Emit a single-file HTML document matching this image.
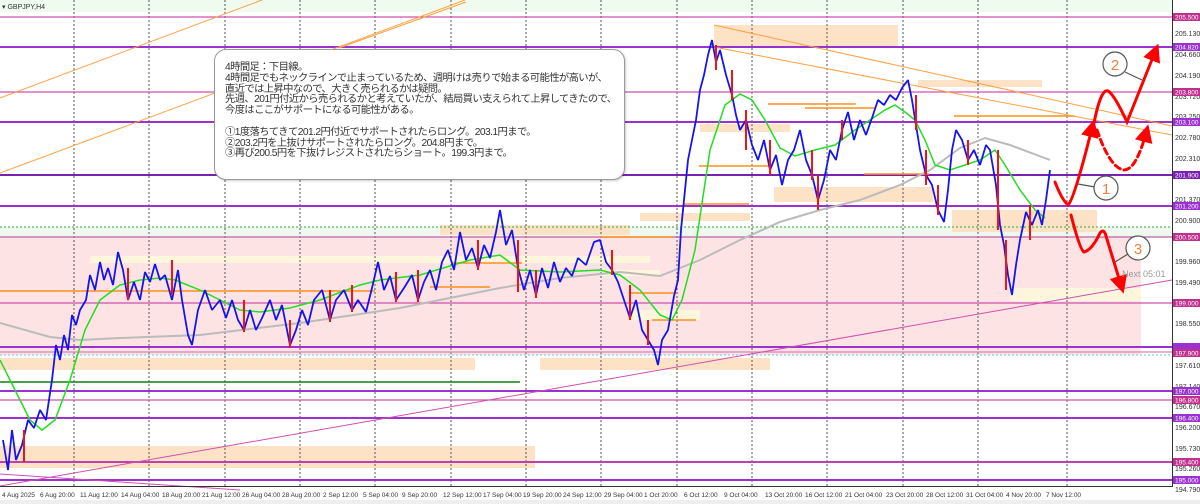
<!DOCTYPE html>
<html><head><meta charset="utf-8"><style>
body{margin:0;background:#fff;width:1200px;height:504px;overflow:hidden;font-family:"Liberation Sans","Noto Sans CJK JP",sans-serif}
#box{position:absolute;left:214px;top:49px;width:411px;height:131px;border:1px solid #999;border-radius:12px;background:#fff;box-sizing:border-box;padding:13px 0 0 10px;font-size:10.3px;line-height:10.8px;color:#333;white-space:pre;letter-spacing:-0.6px;box-shadow:1px 1px 2px rgba(0,0,0,.2)}
</style></head><body>
<svg width="1200" height="504" style="position:absolute;left:0;top:0" font-family="Liberation Sans, sans-serif">
<rect x="0" y="0" width="1200" height="504" fill="#fff"/>
<rect x="0" y="0" width="1172" height="12" fill="#f0fbf0"/>
<rect x="0" y="227" width="1172" height="10" fill="#eef8ee"/>
<rect x="0" y="237" width="1141" height="118" fill="#fde3e3"/>
<rect x="90" y="256" width="560" height="7" fill="#fdf6dc"/>
<rect x="600" y="270" width="60" height="6" fill="#fdf6dc"/>
<rect x="1010" y="288" width="131" height="13" fill="#fdf6dc"/>
<rect x="630" y="310" width="70" height="10" fill="#fdf6dc"/>
<rect x="0" y="358" width="475" height="12" fill="#fde2c6"/>
<rect x="540" y="358" width="230" height="12" fill="#fde2c6"/>
<rect x="0" y="446" width="535" height="22" fill="#fde2c6"/>
<rect x="714" y="25" width="184" height="23" fill="#fde2c6"/>
<rect x="918" y="80" width="124" height="7" fill="#fde2c6"/>
<rect x="700" y="124" width="90" height="8" fill="#fde2c6"/>
<rect x="774" y="187" width="159" height="15" fill="#fde2c6"/>
<rect x="952" y="210" width="145" height="22" fill="#fde2c6"/>
<rect x="640" y="213" width="110" height="8" fill="#fde2c6"/>
<rect x="440" y="225" width="190" height="10" fill="#fde2c6"/>
<g stroke="#555" stroke-width="1" stroke-dasharray="2,2">
<line x1="74" y1="0" x2="74" y2="486"/><line x1="149" y1="0" x2="149" y2="486"/><line x1="225" y1="0" x2="225" y2="486"/><line x1="300" y1="0" x2="300" y2="486"/><line x1="375" y1="0" x2="375" y2="486"/><line x1="451" y1="0" x2="451" y2="486"/><line x1="526" y1="0" x2="526" y2="486"/><line x1="601" y1="0" x2="601" y2="486"/><line x1="677" y1="0" x2="677" y2="486"/><line x1="752" y1="0" x2="752" y2="486"/><line x1="827" y1="0" x2="827" y2="486"/><line x1="903" y1="0" x2="903" y2="486"/><line x1="978" y1="0" x2="978" y2="486"/><line x1="1067" y1="0" x2="1067" y2="486"/>
</g>
<line x1="0" y1="227" x2="1172" y2="227" stroke="#3a3" stroke-dasharray="2,2"/>
<line x1="0" y1="355" x2="1172" y2="355" stroke="#6cd" stroke-dasharray="2,2"/>
<g fill="none">
<line x1="0" y1="17" x2="1172" y2="17" stroke="#d050b0" stroke-width="1.2"/>
<line x1="0" y1="47" x2="1172" y2="47" stroke="#9a32d0" stroke-width="2"/>
<line x1="0" y1="92" x2="1172" y2="92" stroke="#d050b0" stroke-width="1.2"/>
<line x1="0" y1="122" x2="1172" y2="122" stroke="#9a32d0" stroke-width="2"/>
<line x1="0" y1="175" x2="1172" y2="175" stroke="#7a22b0" stroke-width="2"/>
<line x1="0" y1="206" x2="1172" y2="206" stroke="#9a32d0" stroke-width="2"/>
<line x1="0" y1="237" x2="1172" y2="237" stroke="#c060a8" stroke-width="1.2"/>
<line x1="0" y1="303" x2="1172" y2="303" stroke="#d050b0" stroke-width="1.2"/>
<line x1="0" y1="347" x2="1172" y2="347" stroke="#9a32d0" stroke-width="2"/>
<line x1="0" y1="352" x2="1172" y2="352" stroke="#e080c0" stroke-width="1.2"/>
<line x1="0" y1="382" x2="520" y2="382" stroke="#108010" stroke-width="1.5"/>
<line x1="0" y1="391" x2="1172" y2="391" stroke="#9a32d0" stroke-width="2"/>
<line x1="0" y1="400" x2="1172" y2="400" stroke="#d050b0" stroke-width="1.2"/>
<line x1="0" y1="418" x2="1172" y2="418" stroke="#9a32d0" stroke-width="2"/>
<line x1="0" y1="462" x2="1172" y2="462" stroke="#c040b0" stroke-width="2"/>
<line x1="0" y1="480" x2="1172" y2="480" stroke="#9a32d0" stroke-width="2"/>
<g stroke="#ff9020" stroke-width="1.5">
<line x1="0" y1="291" x2="375" y2="291"/><line x1="430" y1="287" x2="490" y2="287"/><line x1="452" y1="263" x2="522" y2="263"/>
<line x1="600" y1="237" x2="673" y2="237"/>
<line x1="768" y1="104" x2="856" y2="104"/><line x1="805" y1="108" x2="875" y2="108"/><line x1="954" y1="116" x2="1075" y2="116"/>
<line x1="699" y1="166" x2="770" y2="166"/><line x1="864" y1="174" x2="929" y2="174"/><line x1="684" y1="204" x2="749" y2="204"/>
<line x1="631" y1="293" x2="677" y2="293"/><line x1="652" y1="320" x2="696" y2="320"/>
</g>
<g stroke="#ffa040" stroke-width="1">
<line x1="0" y1="98" x2="262" y2="0"/><line x1="0" y1="173" x2="465" y2="0"/><line x1="339" y1="48" x2="466" y2="2"/>
<line x1="714" y1="25" x2="1172" y2="126"/><line x1="714" y1="47" x2="1172" y2="135"/>
</g>
<line x1="0" y1="486" x2="1172" y2="280" stroke="#d050b0" stroke-width="1"/>
<line x1="0" y1="474" x2="240" y2="490" stroke="#d050b0" stroke-width="1"/>
<polyline stroke="#bbb" stroke-width="2" points="0,323 50,337 80,340 120,338 200,335 300,323 400,308 500,288 560,278 620,272 660,276 675,270 700,260 740,240 780,222 820,210 860,200 900,185 930,170 960,148 985,138 1010,145 1050,160"/>
<polyline stroke="#22dd22" stroke-width="1.5" points="0,360 15,390 30,420 42,430 55,420 70,380 85,330 100,300 120,285 140,280 160,278 175,280 200,290 220,300 240,310 260,312 290,308 320,300 360,285 380,280 420,275 470,260 500,255 520,270 560,272 600,270 620,275 640,290 660,315 672,320 682,300 695,250 710,150 725,105 740,94 752,100 765,120 780,148 795,156 815,150 835,145 855,130 870,120 885,110 895,105 905,112 915,120 925,140 935,165 950,170 965,165 980,160 995,150 1005,165 1020,190 1035,210 1045,218"/>
<polyline stroke="#1515ee" stroke-width="1.8" stroke-linejoin="bevel" points="3,440 8,470 12,430 16,460 22,445 28,420 34,428 40,410 46,420 52,380 56,345 60,360 64,335 68,350 72,315 76,325 80,310 86,300 90,275 95,290 100,262 104,280 108,268 113,285 118,252 123,270 128,300 134,282 140,300 145,272 150,282 155,264 160,280 165,275 172,300 178,270 182,300 188,335 192,345 198,310 205,290 212,310 220,300 226,318 232,300 238,320 244,330 250,310 256,330 262,318 270,300 276,320 282,305 290,345 296,330 302,310 308,325 314,300 322,290 330,320 336,300 344,290 352,310 358,300 366,312 372,288 378,262 384,290 390,276 396,300 404,288 412,275 418,300 424,282 430,270 436,290 442,262 448,250 454,270 460,232 466,260 472,248 478,268 484,245 490,258 496,232 500,210 506,245 512,230 518,268 524,290 530,270 536,295 542,268 548,288 554,262 560,282 566,268 572,276 578,258 586,265 594,242 600,240 606,262 612,270 618,282 624,300 630,318 636,300 642,330 648,340 654,350 658,365 662,340 668,330 674,296 678,280 681,230 684,200 688,160 692,140 696,120 700,90 704,75 708,55 712,40 716,62 720,50 726,75 732,95 736,115 740,130 746,120 752,145 758,160 764,140 770,170 776,155 782,185 788,160 794,150 800,130 806,160 812,175 818,200 824,180 830,150 836,160 842,130 848,112 854,140 860,120 866,135 872,118 878,100 884,105 890,95 896,100 902,88 908,80 912,100 916,125 920,150 926,175 932,185 938,210 944,222 948,190 952,150 956,130 962,140 968,160 974,150 980,165 986,145 990,150 996,185 1000,225 1004,245 1008,275 1012,295 1016,265 1020,240 1026,212 1032,225 1038,210 1042,225 1046,200 1050,170"/>
<g stroke="#ee1515" stroke-width="2">
<line x1="24" y1="430" x2="24" y2="462"/><line x1="128" y1="268" x2="128" y2="300"/><line x1="172" y1="260" x2="172" y2="295"/><line x1="244" y1="300" x2="244" y2="332"/><line x1="290" y1="320" x2="290" y2="348"/><line x1="330" y1="290" x2="330" y2="322"/><line x1="352" y1="285" x2="352" y2="312"/><line x1="396" y1="272" x2="396" y2="302"/><line x1="418" y1="270" x2="418" y2="302"/><line x1="478" y1="240" x2="478" y2="270"/><line x1="518" y1="240" x2="518" y2="292"/><line x1="536" y1="270" x2="536" y2="298"/><line x1="612" y1="250" x2="612" y2="275"/><line x1="630" y1="285" x2="630" y2="320"/><line x1="648" y1="320" x2="648" y2="345"/>
<line x1="716" y1="45" x2="716" y2="70"/><line x1="732" y1="70" x2="732" y2="100"/><line x1="746" y1="110" x2="746" y2="150"/><line x1="770" y1="140" x2="770" y2="175"/><line x1="812" y1="150" x2="812" y2="180"/><line x1="818" y1="175" x2="818" y2="210"/><line x1="842" y1="120" x2="842" y2="140"/><line x1="916" y1="95" x2="916" y2="130"/><line x1="926" y1="150" x2="926" y2="185"/><line x1="938" y1="185" x2="938" y2="215"/><line x1="968" y1="140" x2="968" y2="165"/><line x1="998" y1="150" x2="998" y2="230"/><line x1="1006" y1="240" x2="1006" y2="290"/><line x1="1030" y1="205" x2="1030" y2="240"/>
</g>
<defs><marker id="ah" markerWidth="6" markerHeight="6" refX="3" refY="3" orient="auto"><path d="M0,0 L6,3 L0,6 z" fill="#f00"/></marker></defs>
<g fill="none" stroke="#f00" stroke-width="3" stroke-linecap="round">
<path d="M1055,182 Q1062,200 1068,205 Q1074,200 1092,128" marker-end="url(#ah)"/>
<path d="M1094,123 Q1101,88 1108,91 Q1114,94 1127,122 L1155,52" marker-end="url(#ah)"/>
<path d="M1097,130 Q1110,168 1124,170 Q1136,170 1146,133" stroke-dasharray="6,4" marker-end="url(#ah)"/>
<path d="M1071,215 Q1080,250 1084,252 Q1092,250 1100,233 Q1104,228 1106,236 L1121,285" marker-end="url(#ah)"/>
</g>
<g stroke="#555" stroke-width="1.2" fill="#fff">
<line x1="1078" y1="184" x2="1095" y2="187"/><line x1="1125" y1="72" x2="1142" y2="80"/><line x1="1128" y1="254" x2="1115" y2="262"/>
<circle cx="1106" cy="188" r="12"/><circle cx="1115" cy="64" r="12"/><circle cx="1138" cy="248" r="12"/>
</g>
<g fill="#f08040" font-size="15" text-anchor="middle"><text x="1106" y="194">1</text><text x="1115" y="70">2</text><text x="1138" y="254">3</text></g>
<text x="1122" y="277" font-size="9" fill="#999">Next 05:01</text>
<text x="2" y="9" font-size="7" fill="#333">▾ GBPJPY,H4</text>
<line x1="1172.5" y1="0" x2="1172.5" y2="487" stroke="#333"/>
<line x1="0" y1="486.5" x2="1173" y2="486.5" stroke="#333"/>
<g font-size="7" fill="#333">
<text x="1175" y="36">205.130</text><text x="1175" y="57">204.660</text><text x="1175" y="78">204.190</text><text x="1175" y="99">203.720</text><text x="1175" y="119">203.250</text><text x="1175" y="140">202.780</text><text x="1175" y="161">202.310</text><text x="1175" y="202">201.370</text><text x="1175" y="223">200.900</text><text x="1175" y="264">199.960</text><text x="1175" y="285">199.490</text><text x="1175" y="326">198.550</text><text x="1175" y="368">197.610</text><text x="1175" y="389">197.140</text><text x="1175" y="409">196.670</text><text x="1175" y="430">196.200</text><text x="1175" y="451">195.730</text><text x="1175" y="471">195.260</text><text x="1175" y="492">194.790</text>
</g>
<g font-size="6.5" fill="#fff">
<rect x="1173" y="13" width="27" height="8" fill="#c0308f"/><text x="1175" y="19.5">205.500</text>
<rect x="1173" y="43" width="27" height="8" fill="#9a32d0"/><text x="1175" y="49.5">204.820</text>
<rect x="1173" y="88" width="27" height="8" fill="#c0308f"/><text x="1175" y="94.5">203.800</text>
<rect x="1173" y="118" width="27" height="8" fill="#9a32d0"/><text x="1175" y="124.5">203.100</text>
<rect x="1173" y="171" width="27" height="8" fill="#7a22b0"/><text x="1175" y="177.5">201.900</text>
<rect x="1173" y="202" width="27" height="8" fill="#9a32d0"/><text x="1175" y="208.5">201.200</text>
<rect x="1173" y="233" width="27" height="8" fill="#c0308f"/><text x="1175" y="239.5">200.500</text>
<rect x="1173" y="299" width="27" height="8" fill="#c0308f"/><text x="1175" y="305.5">199.000</text>
<rect x="1173" y="343" width="27" height="6" fill="#9a32d0"/>
<rect x="1173" y="349" width="27" height="8" fill="#c0308f"/><text x="1175" y="355.5">197.900</text>
<rect x="1173" y="387" width="27" height="8" fill="#9a32d0"/><text x="1175" y="393.5">197.000</text>
<rect x="1173" y="396" width="27" height="8" fill="#c0308f"/><text x="1175" y="402.5">196.800</text>
<rect x="1173" y="414" width="27" height="8" fill="#9a32d0"/><text x="1175" y="420.5">196.400</text>
<rect x="1173" y="458" width="27" height="8" fill="#c0308f"/><text x="1175" y="464.5">195.400</text>
<rect x="1173" y="476" width="27" height="8" fill="#9a32d0"/><text x="1175" y="482.5">195.000</text>
</g>
<rect x="0" y="500" width="1200" height="4" fill="#eee"/>
<g font-size="6.5" fill="#333">
<text x="2" y="497">4 Aug 2025</text><text x="40" y="497">6 Aug 20:00</text><text x="80" y="497">11 Aug 12:00</text><text x="121" y="497">14 Aug 04:00</text><text x="162" y="497">18 Aug 20:00</text><text x="202" y="497">21 Aug 12:00</text><text x="242" y="497">26 Aug 04:00</text><text x="282" y="497">28 Aug 20:00</text><text x="323" y="497">2 Sep 12:00</text><text x="363" y="497">5 Sep 04:00</text><text x="402" y="497">9 Sep 20:00</text><text x="443" y="497">12 Sep 12:00</text><text x="483" y="497">17 Sep 04:00</text><text x="523" y="497">19 Sep 20:00</text><text x="563" y="497">24 Sep 12:00</text><text x="604" y="497">29 Sep 04:00</text><text x="644" y="497">1 Oct 20:00</text><text x="684" y="497">6 Oct 12:00</text><text x="724" y="497">9 Oct 04:00</text><text x="765" y="497">13 Oct 20:00</text><text x="805" y="497">16 Oct 12:00</text><text x="845" y="497">21 Oct 04:00</text><text x="886" y="497">23 Oct 20:00</text><text x="926" y="497">28 Oct 12:00</text><text x="966" y="497">31 Oct 04:00</text><text x="1006" y="497">4 Nov 20:00</text><text x="1046" y="497">7 Nov 12:00</text>
</g>
</g>
</svg>
<div id="box">4時間足：下目線。
4時間足でもネックラインで止まっているため、週明けは売りで始まる可能性が高いが、
直近では上昇中なので、大きく売られるかは疑問。
先週、201円付近から売られるかと考えていたが、結局買い支えられて上昇してきたので、
今度はここがサポートになる可能性がある。

①1度落ちてきて201.2円付近でサポートされたらロング。203.1円まで。
②203.2円を上抜けサポートされたらロング。204.8円まで。
③再び200.5円を下抜けレジストされたらショート。199.3円まで。</div>
</body></html>
